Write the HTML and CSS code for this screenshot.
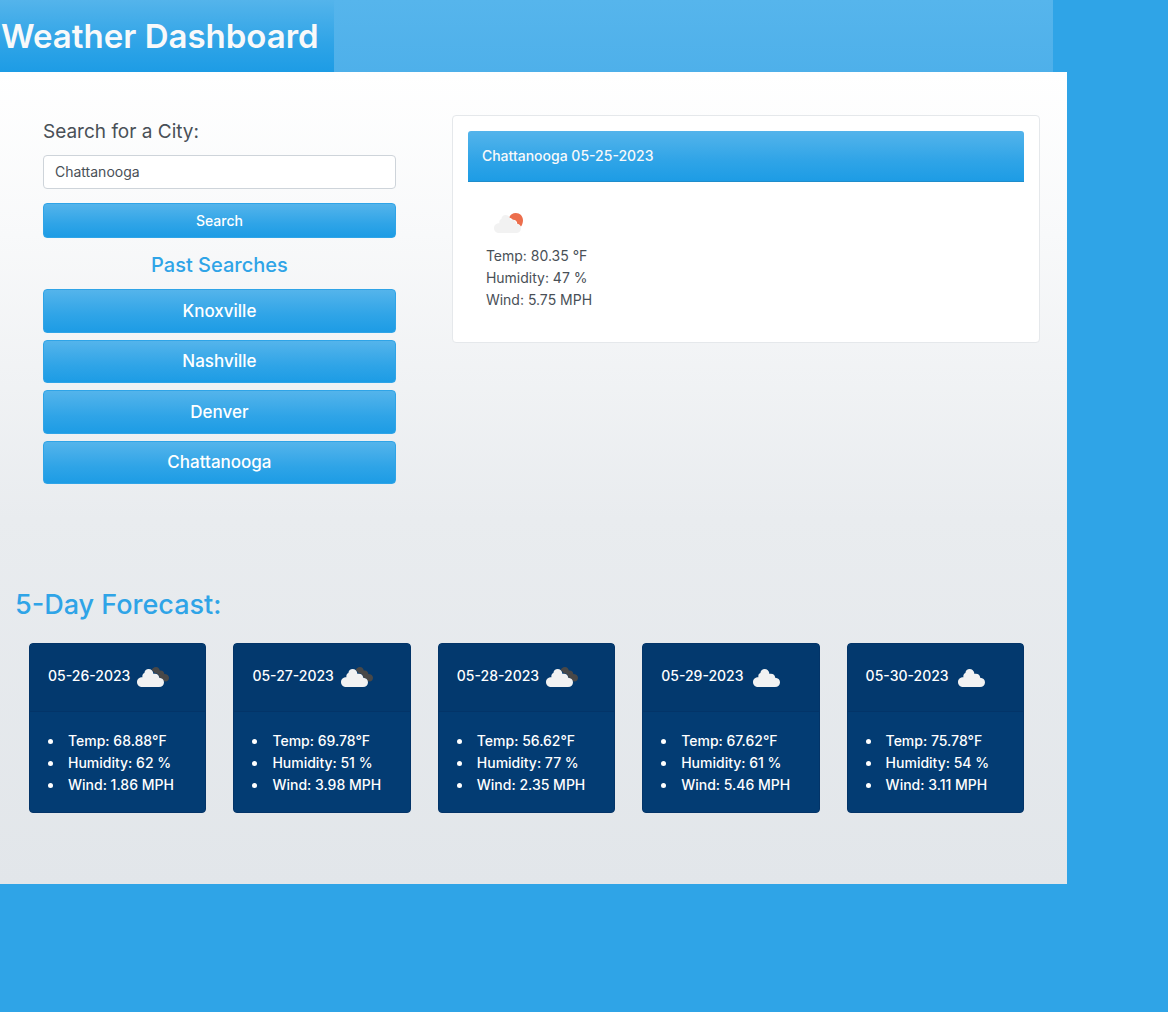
FILE: index.html
```html
<!DOCTYPE html>
<html lang="en">
<head>
<meta charset="utf-8">
<meta name="viewport" content="width=device-width, initial-scale=1">
<title>Weather Dashboard</title>
<link rel="stylesheet" href="styles.css">
</head>
<body>
<svg class="sprite" aria-hidden="true">
  <symbol id="cloud" viewBox="0 0 27 18">
    <path d="M5 18C2 18 0 15.800 0 13C0 10.300 2.300 8.300 5.400 8.300C5 6 6 4.500 7.400 4.100C7.600 1.500 9.500 0 11.500 0C14.200 0 16 1.800 16.500 4.900C19.800 4.300 22 5.800 22.200 8.700C25 8.900 27 10.600 27 13.300C27 16.200 25 18 22 18Z"/>
  </symbol>
  <symbol id="broken" viewBox="0 0 32 21">
    <path fill="#484848" d="M14.500 3.500C15.200 1.400 16.800 0 19 0C21.200 0 22.300 1.200 22.800 3.500C25.500 3 27 4.300 27.300 7C30 7 32 8.500 32 10.700C32 13 30.500 14.500 28.500 14.500C27.500 14.500 26.700 14 26.200 13.200C25.500 11.700 24.300 11 22.500 10.700C22 7.500 20.500 6 17.600 6.200C17 4.600 16 3.900 14.500 3.500Z"/>
    <use href="#cloud" x="0" y="2" width="27" height="18"/>
  </symbol>
  <symbol id="few" viewBox="0 0 29 20">
    <path fill="#ec6e4c" d="M15 5C16 1.700 18.800 0 21.800 0C26 0 29 3.200 29 7.300C29 9.700 28.200 12.200 26.800 13.800C26 12 25 11.100 23.400 11C23 8 21.300 6.600 18.700 6.800C18 5.500 16.800 4.900 15 5Z"/>
    <use href="#cloud" x="0" y="2" width="27" height="18"/>
  </symbol>
</svg>

<header class="topbar">
  <h1 class="brand">Weather Dashboard</h1>
</header>

<main class="page">
  <div class="overview">
    <section>
      <form class="search">
        <label class="search-label" for="city">Search for a City:</label>
        <input class="search-input" id="city" type="text" value="Chattanooga">
        <button class="btn" type="button">Search</button>
      </form>
      <h2 class="past-title">Past Searches</h2>
      <div class="past-list">
        <button class="btn btn-large" type="button">Knoxville</button>
        <button class="btn btn-large" type="button">Nashville</button>
        <button class="btn btn-large" type="button">Denver</button>
        <button class="btn btn-large" type="button">Chattanooga</button>
      </div>
    </section>
    <section class="current">
      <h2 class="current-title">Chattanooga 05-25-2023</h2>
      <div class="current-body">
        <svg class="icon-few" role="img" aria-label="Few clouds"><use href="#few"/></svg>
        <p>Temp: 80.35 °F</p>
        <p>Humidity: 47 %</p>
        <p>Wind: 5.75 MPH</p>
      </div>
    </section>
  </div>

  <section class="forecast">
    <h2 class="forecast-title">5-Day Forecast:</h2>
    <div class="days">
      <article class="day">
        <h3 class="day-head">05-26-2023 <svg class="icon-broken" role="img" aria-label="Broken clouds"><use href="#broken"/></svg></h3>
        <ul class="day-body"><li>Temp: 68.88°F</li><li>Humidity: 62 %</li><li>Wind: 1.86 MPH</li></ul>
      </article>
      <article class="day">
        <h3 class="day-head">05-27-2023 <svg class="icon-broken" role="img" aria-label="Broken clouds"><use href="#broken"/></svg></h3>
        <ul class="day-body"><li>Temp: 69.78°F</li><li>Humidity: 51 %</li><li>Wind: 3.98 MPH</li></ul>
      </article>
      <article class="day">
        <h3 class="day-head">05-28-2023 <svg class="icon-broken" role="img" aria-label="Broken clouds"><use href="#broken"/></svg></h3>
        <ul class="day-body"><li>Temp: 56.62°F</li><li>Humidity: 77 %</li><li>Wind: 2.35 MPH</li></ul>
      </article>
      <article class="day">
        <h3 class="day-head">05-29-2023 <svg class="icon-cloud" role="img" aria-label="Scattered clouds"><use href="#cloud"/></svg></h3>
        <ul class="day-body"><li>Temp: 67.62°F</li><li>Humidity: 61 %</li><li>Wind: 5.46 MPH</li></ul>
      </article>
      <article class="day">
        <h3 class="day-head">05-30-2023 <svg class="icon-cloud" role="img" aria-label="Scattered clouds"><use href="#cloud"/></svg></h3>
        <ul class="day-body"><li>Temp: 75.78°F</li><li>Humidity: 54 %</li><li>Wind: 3.11 MPH</li></ul>
      </article>
    </div>
  </section>
</main>
</body>
</html>
```
FILE: styles.css
```css
:root {
  --blue: #2fa4e7;
  --shine: linear-gradient(#54b4eb, #2fa4e7 60%, #1d9ce5);
}

* {
  box-sizing: border-box;
}

body {
  margin: 0;
  background: var(--blue);
  color: #495057;
  font-family: Inter, "Liberation Sans", sans-serif;
  font-size: 14px;
  line-height: 22px;
}

h1, h2, h3, p, ul {
  margin: 0;
  padding: 0;
  font-weight: 500;
}

.sprite {
  position: absolute;
  width: 0;
  height: 0;
}

.topbar {
  display: flex;
  margin-right: 115px;
  background: linear-gradient(#56b5ec, #4eb0ea);
}

.brand {
  padding: 14px 15px 14px 1px;
  background: var(--shine);
  color: #f8f9fa;
  font-size: 33px;
  font-weight: 600;
  line-height: 44px;
}

.page {
  margin-right: 101px;
  padding: 43px 0 71px;
  background: linear-gradient(#fff, #f8f9fa 20%, #e9ecef 55%, #e2e6ea);
}

.overview {
  display: grid;
  grid-template-columns: 3fr 5fr;
  align-items: start;
  gap: 56px;
  padding: 0 27px 0 43px;
}

.search {
  display: flex;
  flex-direction: column;
}

.search-label {
  padding: 3px 0 9px;
  font-size: 19px;
  line-height: 28px;
}

.search-input {
  width: 100%;
  height: 34px;
  margin-bottom: 14px;
  padding: 0 11px 1px;
  border: 1px solid #ced4da;
  border-radius: 4px;
  background: #fff;
  color: #495057;
  font: inherit;
}

.btn {
  width: 100%;
  height: 35px;
  padding: 0;
  border: 1px solid var(--blue);
  border-radius: 4px;
  background: var(--shine);
  color: #fff;
  font: inherit;
  font-weight: 500;
}

.past-title {
  padding: 13px 0 10px;
  color: var(--blue);
  font-size: 20px;
  line-height: 28px;
  text-align: center;
}

.past-list {
  display: grid;
  grid-auto-rows: 1fr;
  gap: 7px;
  min-height: 195px;
}

.btn-large {
  height: auto;
  font-size: 17px;
}

.current {
  padding: 15px;
  border: 1px solid #e5e8eb;
  border-radius: 4px;
  background: #fff;
}

.current-title {
  padding: 14px;
  border-bottom: 1px solid #1f8dcb;
  border-radius: 3px 3px 0 0;
  background: var(--shine);
  color: #f8f9fa;
  font-size: 14px;
  line-height: 22px;
}

.current-body {
  padding: 31px 18px 16px;
}

.icon-few {
  display: block;
  width: 29px;
  height: 20px;
  margin: 0 8px 12px;
}

.current-body p {
  font-weight: 400;
}

.forecast {
  padding: 104px 43px 0 15px;
}

.forecast-title {
  color: var(--blue);
  font-size: 27px;
  line-height: 34px;
}

.days {
  display: grid;
  grid-template-columns: repeat(5, 1fr);
  gap: 27px;
  padding: 21px 0 0 14px;
}

.day {
  border: 1px solid #033468;
  border-radius: 4px;
  background: #033c73;
  color: #fff;
}

.day-head {
  display: flex;
  align-items: center;
  height: 68px;
  padding: 0 0 4px 18px;
  border-bottom: 1px solid #033468;
  background: #03396e;
  font-size: 14px;
}

.icon-broken {
  width: 32px;
  height: 21px;
  margin: 4px 0 0 7px;
}

.icon-cloud {
  width: 27px;
  height: 18px;
  margin: 4px 0 0 9px;
}

.icon-broken,
.icon-cloud,
.icon-few {
  flex: none;
  fill: #f2f2f2;
}

.day-body {
  padding: 18px 0 16px 18px;
  font-weight: 500;
  list-style-position: inside;
}
```
